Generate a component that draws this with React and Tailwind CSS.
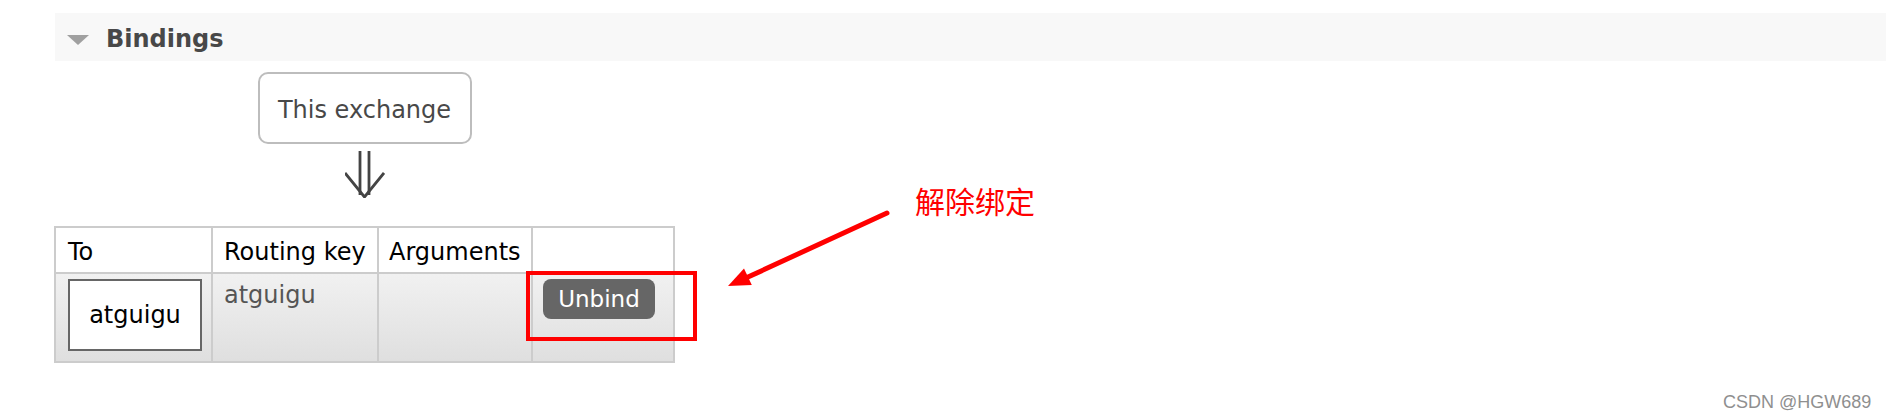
import React from 'react';

const bindings = [{ to: 'atguigu', routingKey: 'atguigu', args: '' }];

const App = () => {
  return (
    <div className="relative w-[1886px] h-[418px] bg-white overflow-hidden font-['DejaVu_Sans',Verdana,sans-serif]">
      <div className="pt-[13px] pl-[55px]">
        {/* Section header */}
        <div className="h-[48px] pt-[4px] bg-[#f8f8f8] flex items-center">
          <svg width="22" height="10" viewBox="0 0 22 10" className="ml-[12px] mt-[2px]">
            <polygon points="0,0 22,0 11,10" fill="#a0a0a0" />
          </svg>
          <h2 className="ml-[17px] text-[24px] font-bold text-[#484848]">Bindings</h2>
        </div>

        <div className="w-[619px] flex flex-col items-center">
          <div className="mt-[11px] w-[214px] h-[72px] pt-[4px] border-2 border-[#bdbdbd] rounded-[10px] flex items-center justify-center text-[24px] text-[#484848]">
            This exchange
          </div>

          {/* double down arrow */}
          <svg width="40" height="47" viewBox="0 0 40 47" className="mt-[7px]">
            <g stroke="#444" strokeWidth="2.8" fill="none">
              <line x1="15" y1="0" x2="15" y2="44" />
              <line x1="24" y1="0" x2="24" y2="44" />
              <polyline points="0,22 19.5,46 39,22" />
            </g>
          </svg>

          <table className="mt-[28px] w-[619px] table-fixed border-collapse text-[24px] text-black">
            <colgroup>
              <col className="w-[157px]" />
              <col className="w-[166px]" />
              <col className="w-[154px]" />
              <col className="w-[142px]" />
            </colgroup>
            <thead>
              <tr className="bg-white">
                <th className="border-2 border-[#cccccc] pl-[12px] pt-[10px] pb-[6px] text-left font-normal leading-[28px]">To</th>
                <th className="border-2 border-[#cccccc] pl-[11px] pt-[10px] pb-[6px] text-left font-normal leading-[28px] whitespace-nowrap">Routing key</th>
                <th className="border-2 border-[#cccccc] pl-[10px] pt-[10px] pb-[6px] text-left font-normal leading-[28px]">Arguments</th>
                <th className="border-2 border-[#cccccc]"></th>
              </tr>
            </thead>
            <tbody>
              {bindings.map((b) => (
                <tr key={b.to}>
                  <td className="border-2 border-[#cccccc] bg-linear-to-b from-[#f1f1f1] to-[#dfdfdf] align-top pl-[12px] pt-[5px] pb-[10px]">
                    <div className="w-[134px] h-[72px] border-2 border-[#666] bg-white flex items-center justify-center text-black">
                      {b.to}
                    </div>
                  </td>
                  <td className="border-2 border-[#cccccc] bg-linear-to-b from-[#f1f1f1] to-[#dfdfdf] align-top pl-[11px] pt-[7px] leading-[28px] text-[#555]">
                    {b.routingKey}
                  </td>
                  <td className="border-2 border-[#cccccc] bg-linear-to-b from-[#f1f1f1] to-[#dfdfdf] align-top">{b.args}</td>
                  <td className="border-2 border-[#cccccc] bg-linear-to-b from-[#f1f1f1] to-[#dfdfdf] align-top pl-[10px] pt-[5px]">
                    <button className="w-[112px] h-[40px] rounded-[8px] bg-[#666] text-white text-[23px] flex items-center justify-center">
                      Unbind
                    </button>
                  </td>
                </tr>
              ))}
            </tbody>
          </table>
        </div>
      </div>

      {/* annotations */}
      <div className="absolute left-[526px] top-[271px] w-[171px] h-[70px] border-4 border-[#ff0000]"></div>
      <svg className="absolute left-[720px] top-[205px]" width="175" height="90" viewBox="0 0 175 90">
        <line x1="167" y1="8" x2="28" y2="72" stroke="#ff0000" strokeWidth="5" strokeLinecap="round" />
        <polygon points="8,81 24,63.6 31.8,80" fill="#ff0000" />
      </svg>
      <div className="absolute left-[915px] top-[185px] text-[30px] leading-[30px] text-[#ff0000] font-['Noto_Sans_CJK_SC',sans-serif]">
        解除绑定
      </div>
      <div className="absolute left-[1723px] top-[389px] text-[18px] text-[#8f8f8f] font-['Liberation_Sans',Arial,sans-serif]">
        CSDN @HGW689
      </div>
    </div>
  );
};

export default App;
